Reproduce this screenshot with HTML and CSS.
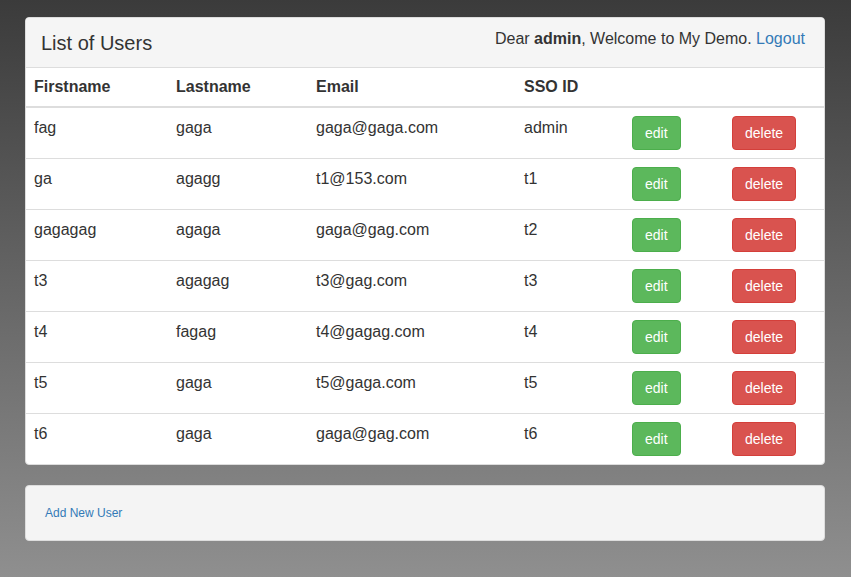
FILE: index.html
```html
<!DOCTYPE html>
<html>
<head>
<meta charset="utf-8">
<link rel="stylesheet" href="styles.css">
</head>
<body>
<div class="page">
  <div class="panel">
    <div class="panel-heading">
      <span class="title">List of Users</span>
      <span class="welcome">Dear <b>admin</b>, Welcome to My Demo. <a href="#">Logout</a></span>
    </div>
    <table class="users">
      <colgroup>
        <col class="c1"><col class="c2"><col class="c3"><col class="c4"><col class="c5"><col class="c6">
      </colgroup>
      <thead>
        <tr><th>Firstname</th><th>Lastname</th><th>Email</th><th>SSO ID</th><th></th><th></th></tr>
      </thead>
      <tbody>
        <tr><td>fag</td><td>gaga</td><td>gaga@gaga.com</td><td>admin</td><td><a class="btn edit">edit</a></td><td><a class="btn del">delete</a></td></tr>
        <tr><td>ga</td><td>agagg</td><td>t1@153.com</td><td>t1</td><td><a class="btn edit">edit</a></td><td><a class="btn del">delete</a></td></tr>
        <tr><td>gagagag</td><td>agaga</td><td>gaga@gag.com</td><td>t2</td><td><a class="btn edit">edit</a></td><td><a class="btn del">delete</a></td></tr>
        <tr><td>t3</td><td>agagag</td><td>t3@gag.com</td><td>t3</td><td><a class="btn edit">edit</a></td><td><a class="btn del">delete</a></td></tr>
        <tr><td>t4</td><td>fagag</td><td>t4@gagag.com</td><td>t4</td><td><a class="btn edit">edit</a></td><td><a class="btn del">delete</a></td></tr>
        <tr><td>t5</td><td>gaga</td><td>t5@gaga.com</td><td>t5</td><td><a class="btn edit">edit</a></td><td><a class="btn del">delete</a></td></tr>
        <tr><td>t6</td><td>gaga</td><td>gaga@gag.com</td><td>t6</td><td><a class="btn edit">edit</a></td><td><a class="btn del">delete</a></td></tr>
      </tbody>
    </table>
  </div>
  <div class="panel well">
    <a href="#" class="add">Add New User</a>
  </div>
</div>
</body>
</html>
```
FILE: styles.css
```css
html, body {
  margin: 0;
  padding: 0;
  height: 100%;
}
body {
  background: linear-gradient(to bottom, #3b3b3b 0%, #6a6a6a 55%, #8f8f8f 100%);
  font-family: "Liberation Sans", Arial, sans-serif;
  color: #333;
  font-size: 16px;
}
.page {
  padding: 17px 26px 0 25px;
  display: flex;
  flex-direction: column;
  gap: 20px;
}
.panel {
  background: #fff;
  border: 1px solid #ddd;
  border-radius: 4px;
  overflow: hidden;
}
.panel-heading {
  background: #f5f5f5;
  border-bottom: 1px solid #ddd;
  height: 50px;
  box-sizing: border-box;
  display: flex;
  justify-content: space-between;
  align-items: flex-start;
  padding: 0 19px 0 15px;
}
.title {
  font-size: 20px;
  line-height: 24px;
  margin-top: 13px;
  color: #333;
}
.welcome {
  font-size: 16px;
  line-height: 20px;
  margin-top: 11px;
}
.welcome a, .add {
  color: #337ab7;
  text-decoration: none;
}
.users {
  width: 100%;
  border-collapse: collapse;
  table-layout: fixed;
}
.c1 { width: 142px; }
.c2 { width: 140px; }
.c3 { width: 208px; }
.c4 { width: 108px; }
.c5 { width: 100px; }
.c6 { width: auto; }
.users th {
  text-align: left;
  font-weight: bold;
  padding: 8px 8px;
  line-height: 22px;
  border-bottom: 2px solid #ddd;
}
.users td {
  padding: 8px 8px;
  line-height: 24px;
  vertical-align: top;
  border-top: 1px solid #ddd;
  height: 34px;
  box-sizing: content-box;
}
.users tbody tr:first-child td {
  border-top: 0;
}
.btn {
  display: inline-block;
  vertical-align: top;
  box-sizing: border-box;
  height: 34px;
  padding: 6px 12px;
  font-size: 14px;
  line-height: 20px;
  border-radius: 4px;
  border: 1px solid transparent;
  color: #fff;
}
.edit {
  background: #5cb85c;
  border-color: #4cae4c;
}
.del {
  background: #d9534f;
  border-color: #d43f3a;
}
.well {
  background: #f4f4f4;
  height: 56px;
  box-sizing: border-box;
  padding: 17px 19px;
}
.add {
  font-size: 12px;
  line-height: 17px;
}
```
